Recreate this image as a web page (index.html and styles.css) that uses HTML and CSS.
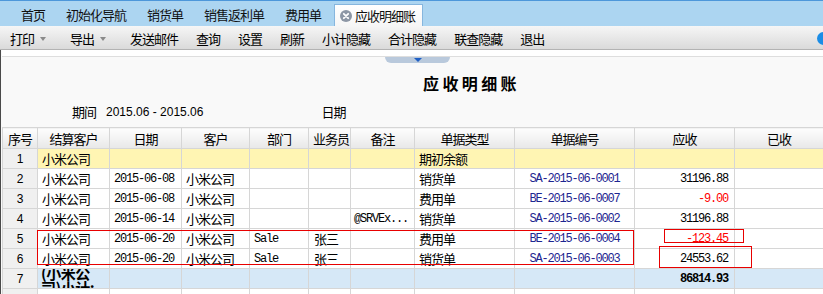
FILE: index.html
```html
<!DOCTYPE html>
<html lang="zh-CN">
<head>
  <meta charset="UTF-8">
  <meta name="viewport" content="width=device-width, initial-scale=1">
  <title>应收明细账</title>
  <link rel="stylesheet" href="styles.css">
</head>
<body>

<div class="tabbar">
  <span class="tab">首页</span>
  <span class="tab">初始化导航</span>
  <span class="tab">销货单</span>
  <span class="tab">销售返利单</span>
  <span class="tab">费用单</span>
  <span class="tab active">
    <svg class="close" width="12" height="12" viewBox="0 0 12 12">
      <circle cx="6" cy="6" r="6" fill="#8d97a5"/>
      <path d="M3.8 3.8 L8.2 8.2 M8.2 3.8 L3.8 8.2" stroke="#fff" stroke-width="1.8" stroke-linecap="round"/>
    </svg>应收明细账
  </span>
</div>

<div class="toolbar">
  <span class="tool drop">打印<i class="caret"></i></span>
  <span class="tool drop">导出<i class="caret"></i></span>
  <span class="tool">发送邮件</span>
  <span class="tool">查询</span>
  <span class="tool">设置</span>
  <span class="tool">刷新</span>
  <span class="tool">小计隐藏</span>
  <span class="tool">合计隐藏</span>
  <span class="tool">联查隐藏</span>
  <span class="tool">退出</span>
  <span class="help"></span>
</div>

<div class="content">
  <div class="collapse"></div>
  <div class="collapse-tab"><i class="arrow"></i></div>

  <h1 class="title">应收明细账</h1>

  <div class="period">
    <span>期间</span>
    <span class="range">2015.06 - 2015.06</span>
    <span class="date-lbl">日期</span>
  </div>

  <div class="grid-wrap">
    <table class="grid">
      <colgroup>
        <col style="width:35px"><col style="width:72px"><col style="width:72px"><col style="width:68px">
        <col style="width:59px"><col style="width:42px"><col style="width:64px"><col style="width:100px">
        <col style="width:120px"><col style="width:100px"><col style="width:89px">
      </colgroup>
      <thead>
        <tr>
          <th>序号</th><th>结算客户</th><th>日期</th><th>客户</th><th>部门</th><th>业务员</th>
          <th>备注</th><th>单据类型</th><th>单据编号</th><th>应收</th><th>已收</th>
        </tr>
      </thead>
      <tbody>
        <tr class="row-open">
          <td class="no">1</td><td>小米公司</td><td></td><td></td><td></td><td></td>
          <td></td><td>期初余额</td><td></td><td></td><td></td>
        </tr>
        <tr>
          <td class="no">2</td><td>小米公司</td><td class="mono">2015-06-08</td><td>小米公司</td><td></td><td></td>
          <td></td><td>销货单</td><td class="mono bill">SA-2015-06-0001</td><td class="mono amt">31196.88</td><td></td>
        </tr>
        <tr>
          <td class="no">3</td><td>小米公司</td><td class="mono">2015-06-08</td><td>小米公司</td><td></td><td></td>
          <td></td><td>费用单</td><td class="mono bill">BE-2015-06-0007</td><td class="mono amt neg">-9.00</td><td></td>
        </tr>
        <tr>
          <td class="no">4</td><td>小米公司</td><td class="mono">2015-06-14</td><td>小米公司</td><td></td><td></td>
          <td class="mono note">@SRVEx...</td><td>销货单</td><td class="mono bill">SA-2015-06-0002</td><td class="mono amt">31196.88</td><td></td>
        </tr>
        <tr>
          <td class="no">5</td><td>小米公司</td><td class="mono">2015-06-20</td><td>小米公司</td><td class="mono">Sale</td><td class="man">张三</td>
          <td></td><td>费用单</td><td class="mono bill">BE-2015-06-0004</td><td class="mono amt neg">-123.45</td><td></td>
        </tr>
        <tr>
          <td class="no">6</td><td>小米公司</td><td class="mono">2015-06-20</td><td>小米公司</td><td class="mono">Sale</td><td class="man">张三</td>
          <td></td><td>销货单</td><td class="mono bill">SA-2015-06-0003</td><td class="mono amt">24553.62</td><td></td>
        </tr>
        <tr class="row-sub">
          <td class="no">7</td>
          <td class="sub-label"><div class="clip"><div class="clip-text">(小米公司)小计:</div></div></td>
          <td></td><td></td><td></td><td></td>
          <td></td><td></td><td></td><td class="mono amt total">86814.93</td><td></td>
        </tr>
        <tr>
          <td class="no"></td><td></td><td></td><td></td><td></td><td></td>
          <td></td><td></td><td></td><td></td><td></td>
        </tr>
      </tbody>
    </table>

    <div class="mark mark-rows"></div>
    <div class="mark mark-neg"></div>
    <div class="mark mark-sum"></div>
  </div>
</div>

</body>
</html>
```

FILE: styles.css
```css
* { margin: 0; padding: 0; box-sizing: border-box; }

body {
  font-family: "Noto Sans CJK SC", sans-serif;
  font-size: 13px;
  letter-spacing: -1px;
  color: #000;
  background: #f9f9f9;
  width: 823px;
  height: 294px;
  overflow: hidden;
}

/* tabs */
.tabbar {
  display: flex;
  align-items: flex-end;
  height: 26px;
  padding-left: 10px;
  background: #acd5f1;
  border-top: 1px solid #4d97da;
}

.tab {
  height: 22px;
  line-height: 20px;
  padding: 1px 10px 0 11px;
  color: #111;
}

.tab.active {
  display: flex;
  align-items: center;
  gap: 3px;
  margin-left: 3px;
  padding: 0 7px 0 5px;
  background: linear-gradient(#ffffff, #f6f6f6);
  border: 1px solid #86b6de;
  border-bottom: none;
}

.close { flex-shrink: 0; }

/* toolbar */
.toolbar {
  display: flex;
  align-items: center;
  gap: 18px;
  height: 24px;
  padding: 2px 0 0 10px;
  background: linear-gradient(#f6f6f6, #dadada);
  border-bottom: 1px solid #b3b3b3;
}

.tool { line-height: 21px; }

.drop {
  display: flex;
  align-items: center;
  margin-right: 6px;
}

.caret {
  width: 0;
  height: 0;
  margin-left: 6px;
  border-top: 4px solid #8a8a8a;
  border-left: 3px solid transparent;
  border-right: 3px solid transparent;
}

.help {
  width: 13px;
  height: 13px;
  margin-left: auto;
  margin-right: -7px;
  border-radius: 50%;
  background: #1b8de6;
}

/* page */
.content {
  height: 244px;
  padding-left: 1px;
  border-left: 1px solid #4a4a4a;
  overflow: hidden;
}

.collapse {
  height: 7px;
  background: #fff;
  border-bottom: 1px solid #dedede;
}

.collapse-tab {
  display: flex;
  justify-content: center;
  align-items: center;
  width: 65px;
  height: 6px;
  margin-left: 383px;
  background: #b9c9dc;
  border-radius: 0 0 6px 6px;
}

.arrow {
  width: 0;
  height: 0;
  border-top: 4px solid #1f5fc4;
  border-left: 4px solid transparent;
  border-right: 4px solid transparent;
}

.title {
  margin-top: 8px;
  padding-left: 421px;
  font-size: 16px;
  font-weight: bold;
  letter-spacing: 3.4px;
  line-height: 24px;
}

.period {
  display: flex;
  margin-top: 9px;
  padding-left: 70px;
  line-height: 16px;
}

.range {
  margin-left: 10px;
  font-family: "Liberation Sans", sans-serif;
  font-size: 12px;
  letter-spacing: 0;
}

.date-lbl { margin-left: 118px; }

/* grid */
.grid-wrap {
  position: relative;
  margin-top: 7px;
}

.grid {
  width: 821px;
  table-layout: fixed;
  border-collapse: collapse;
  background: #fff;
}

.grid th,
.grid td {
  height: 20px;
  padding: 0 4px;
  border: 1px solid #d6d6d6;
  white-space: nowrap;
  overflow: hidden;
  text-align: left;
  font-weight: normal;
}

.grid th {
  height: 21px;
  text-align: center;
  background: linear-gradient(#fdfdfd, #e8e8e8);
}

.grid td.no {
  padding: 0;
  text-align: center;
  background: #f0f0f0;
  font-family: "Liberation Sans", sans-serif;
  font-size: 12px;
  letter-spacing: 0;
}

.mono {
  font-family: "Liberation Mono", monospace;
  font-size: 12px;
  letter-spacing: -1.2px;
}

.grid td.note { padding-left: 3px; }
.grid td.man { padding-left: 5px; }
.grid td.bill { text-align: center; color: #1d2690; }
.grid td.amt { text-align: right; padding-right: 6px; }
.grid td.neg { color: #f00; }
.grid td.total { font-weight: bold; }

.row-open td { background: #fff5b3; }
.row-sub td { background: #d6e8f7; }

.grid td.sub-label {
  padding: 0 3px;
  vertical-align: top;
  white-space: normal;
}

.clip {
  height: 19px;
  overflow: hidden;
}

.clip-text {
  margin-top: -4px;
  font-size: 15px;
  font-weight: bold;
  line-height: 15px;
  letter-spacing: -0.5px;
}

/* red annotation boxes */
.mark {
  position: absolute;
  border: 1px solid #e80000;
}

.mark-rows { left: 35px; top: 103px; width: 597px; height: 35px; }
.mark-neg { left: 662px; top: 102px; width: 80px; height: 14px; }
.mark-sum { left: 657px; top: 119px; width: 93px; height: 22px; }
```
